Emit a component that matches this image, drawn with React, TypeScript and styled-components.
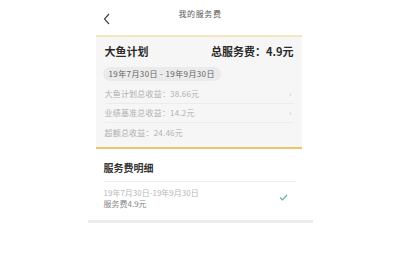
import React from "react";
import styled, { createGlobalStyle } from "styled-components";

const Global = createGlobalStyle`
  html, body { margin: 0; padding: 0; background: #fff; }
  body { font-family: "Noto Sans CJK SC", "Noto Sans", sans-serif; }
`;

const Page = styled.div`
  width: 225px;
  margin: 0 auto;
  display: flex;
  flex-direction: column;
`;

const TopBar = styled.div`
  height: 35px;
  position: relative;
  display: flex;
  align-items: flex-start;
  justify-content: center;
`;

const Back = styled.div`
  position: absolute;
  left: 14px;
  top: 6px;
  width: 10px;
  height: 12px;
`;

const Title = styled.div`
  margin-top: 8px;
  font-size: 8px;
  line-height: 12px;
  color: #555;
  letter-spacing: 0.6px;
`;

const Card = styled.div`
  margin: 0 11px 0 8px;
  background: #f6f6f6;
  border-top: 2px solid #f5e7bd;
  border-bottom: 2px solid #ecc56a;
  padding: 7px 8px 5px 9px;
`;

const CardHead = styled.div`
  display: flex;
  justify-content: space-between;
  align-items: center;
  font-size: 11px;
  line-height: 14px;
  font-weight: 700;
  color: #2a2a2a;
`;

const Pill = styled.div`
  align-self: flex-start;
  display: inline-block;
  margin-top: 9px;
  margin-left: -2px;
  padding: 0 6px;
  height: 14px;
  line-height: 14px;
  border-radius: 7px;
  background: #ebebeb;
  font-size: 8px;
  letter-spacing: 0.4px;
  color: #666;
`;

const Rows = styled.div`
  margin-top: 2px;
  display: flex;
  flex-direction: column;
`;

const Row = styled.div<{ $last?: boolean }>`
  display: flex;
  justify-content: space-between;
  align-items: center;
  height: 18.5px;
  border-bottom: ${(p) => (p.$last ? "none" : "1px solid #ececec")};
  font-size: 8px;
  letter-spacing: 0.2px;
  color: #b0b0b0;
`;

const Chev = styled.span`
  font-size: 8px;
  color: #c4c4c4;
  margin-right: 2px;
`;

const Detail = styled.div`
  padding: 12px 17px 0 16px;
  display: flex;
  flex-direction: column;
`;

const DetailTitle = styled.div`
  font-size: 10px;
  line-height: 14px;
  font-weight: 700;
  color: #333;
  padding-bottom: 6px;
  border-bottom: 1px solid #eeeeee;
`;

const Item = styled.div`
  display: flex;
  justify-content: space-between;
  align-items: center;
  padding: 5px 0 6px;
`;

const ItemText = styled.div`
  display: flex;
  flex-direction: column;
`;

const ItemLine = styled.div<{ $dark?: boolean }>`
  font-size: 8px;
  line-height: 11px;
  color: ${(p) => (p.$dark ? "#888" : "#b8b8b8")};
`;

const Divider = styled.div`
  height: 3px;
  background: #ececec;
  margin-top: 5px;
`;

export default function App() {
  return (
    <>
      <Global />
      <Page>
        <TopBar>
          <Back>
            <svg width="10" height="12" viewBox="0 0 10 12">
              <path d="M7 1 L2.5 6 L7 11" fill="none" stroke="#444" strokeWidth="1.2" />
            </svg>
          </Back>
          <Title>我的服务费</Title>
        </TopBar>
        <Card>
          <CardHead>
            <span>大鱼计划</span>
            <span>总服务费：4.9元</span>
          </CardHead>
          <Pill>19年7月30日 - 19年9月30日</Pill>
          <Rows>
            <Row>
              <span>大鱼计划总收益：38.66元</span>
              <Chev>›</Chev>
            </Row>
            <Row>
              <span>业绩基准总收益：14.2元</span>
              <Chev>›</Chev>
            </Row>
            <Row $last>
              <span>超额总收益：24.46元</span>
            </Row>
          </Rows>
        </Card>
        <Detail>
          <DetailTitle>服务费明细</DetailTitle>
          <Item>
            <ItemText>
              <ItemLine>19年7月30日-19年9月30日</ItemLine>
              <ItemLine $dark>服务费4.9元</ItemLine>
            </ItemText>
            <svg width="9" height="7" viewBox="0 0 9 7" style={{ marginRight: 8 }}>
              <path d="M1 3.5 L3.5 6 L8 1" fill="none" stroke="#5bb8a0" strokeWidth="1.2" />
            </svg>
          </Item>
        </Detail>
        <Divider />
      </Page>
    </>
  );
}
